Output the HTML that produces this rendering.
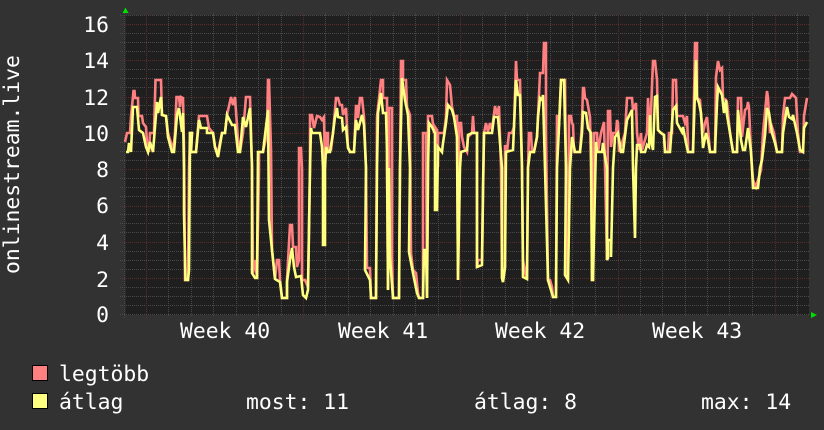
<!DOCTYPE html>
<html><head><meta charset="utf-8"><style>
html,body{margin:0;padding:0;background:#323232}
svg{display:block}
text{font-family:"DejaVu Sans Mono","Liberation Mono",monospace;font-size:21.4px;fill:#fff}
</style></head><body>
<svg width="824" height="430" viewBox="0 0 824 430" xmlns="http://www.w3.org/2000/svg">
<rect width="824" height="430" fill="#323232"/>
<rect x="124" y="15" width="685" height="300" fill="#1f1f1f"/>
<rect x="124" y="15" width="2" height="300" fill="#2a2a2a"/>
<g shape-rendering="crispEdges" stroke-width="1" fill="none">
<path stroke="#4a4a4a" stroke-dasharray="1 1" d="M120 15.5H809M120 33.5H809M120 42.5H809M120 51.5H809M120 69.5H809M120 78.5H809M120 87.5H809M120 105.5H809M120 114.5H809M120 123.5H809M120 142.5H809M120 151.5H809M120 160.5H809M120 178.5H809M120 187.5H809M120 196.5H809M120 214.5H809M120 223.5H809M120 232.5H809M120 251.5H809M120 260.5H809M120 269.5H809M120 287.5H809M120 296.5H809M120 305.5H809M120 314.5H809"/>
<path stroke="#4a4a4a" stroke-dasharray="1 1" d="M124.5 13V318M168.5 13V317M191.5 13V317M213.5 13V317M236.5 13V317M258.5 13V317M281.5 13V317M325.5 13V317M348.5 13V317M370.5 13V317M393.5 13V317M415.5 13V317M438.5 13V317M482.5 13V317M505.5 13V317M527.5 13V317M550.5 13V317M572.5 13V317M595.5 13V317M640.5 13V317M662.5 13V317M685.5 13V317M707.5 13V317M729.5 13V317M752.5 13V317M797.5 13V317"/>
<path stroke="#5a2c2c" stroke-dasharray="1 1" d="M120 24.5H811M120 60.5H811M120 97.5H811M120 133.5H811M120 169.5H811M120 206.5H811M120 242.5H811M120 278.5H811"/>
<path stroke="#5a2c2c" stroke-dasharray="1 1" d="M146.5 13V319M303.5 13V319M460.5 13V319M618.5 13V319M775.5 13V319"/>
</g>
<polyline fill="none" stroke="#ff8080" stroke-width="2.6" stroke-linejoin="miter" points="125,142 127,133 130,133 131,117 133.5,91 134.5,91 135,98 138,98 138.5,116 142,116 143,123 146,127 147,143 149,152 150,133 154,133 155.5,80 161,80 162,115 166,116 168,133 171,143 173,152 175,133 176.5,97 179,97 180,107 181,97 183,98 184,147 185,280 188,280 189,170 190,133 192,133 191,152 196,152 199,116 207,116 209,128 213,133 215,147 218,152 222,133 225,133 227,115 231,97 233,105 235,97 238,140 240,152 243,133 246,97 248,97 250,97 252,167 253,273 255,260 257,278 259,170 259,152 263,152 267,133 268,80 269,80 271,150 272,250 275,279 277,260 279,260 280,280 282,298 287,298 287,280 290,225 292,225 293,247 296,247 297,267 299,260 299,148 301,148 302,170 302,280 305,280 308,287 310,168 310,115 312,115 314,128 317,116 320,117 322,120 324,117 325,168 326,133 328,133 328,152 331,150 333,133 336,98 338,98 340,105 342,105 343,115 346,108 348,147 350,152 354,152 356,106 358,106 358,118 360,98 362,98 364,117 366,168 367,268 370,268 371,298 376,298 377,117 381,80 383,80 383,98 387,98 387,168 388,290 389,168 389,108 392,108 392,257 393,298 399,298 400,168 401,61 403,61 403,80 406,80 407,107 410,115 411,253 413,270 416,273 418,293 419,298 423,298 423,133 426,133 427,298 428,168 428,116 432,116 434,133 435,127 437,130 438,167 438,133 444,133 446,117 447,80 450,85 452,107 454,116 457,116 458,280 459,123 461,123 462,137 464,147 467,152 468,137 472,133 473,116 474,133 477,133 477,267 478,260 482,260 484,133 486,123 488,132 490,123 492,130 495,106 497,115 499,106 501,168 502,278 503,282 505,267 505,145 507,152 509,133 512,133 514,127 516,61 517,80 520,80 522,168 523,260 525,272 527,279 528,168 529,133 531,133 532,152 534,152 537,137 538,117 540,73 543,73 544,43 546,43 546,133 548,280 550,280 552,287 553,297 556,297 557,116 558,116 559,127 561,80 565,80 566,168 567,275 568,280 569,116 571,116 572,123 573,125 574,152 580,152 582,123 583,88 584,88 585,98 587,100 590,117 591,168 592,280 593,280 594,133 597,133 598,152 601,133 604,122 605,167 607,260 608,111 610,111 611,147 613,133 616,133 617,120 618,123 619,152 622,143 625,133 627,98 632,98 633,110 636,103 637,133 639,150 641,133 642,150 647,133 648,98 650,137 653,61 655,61 657,80 658,130 661,133 664,135 665,152 668,152 669,133 672,133 673,80 676,80 677,116 683,116 685,123 687,116 688,143 688,152 693,152 695,43 697,43 697,98 700,100 701,115 703,133 705,123 707,117 709,140 710,152 715,152 716,77 718,61 720,70 722,68 723,98 726,100 727,103 730,133 733,152 737,152 738,98 741,98 742,137 745,110 747,108 748,102 749,108 751,152 752,168 753,180 756,187 758,180 761,170 763,133 767,91 768,98 770,133 772,127 774,133 777,152 782,152 783,116 785,98 790,98 792,94 796,98 798,133 800,152 803,152 804,116 807,98"/>
<polyline fill="none" stroke="#ffff80" stroke-width="2.6" stroke-linejoin="miter" points="126,152 128,152 129,143 131,152 133,107 137,107 139,130 143,133 146,147 148,152 150,142 153,152 157,102 158,113 161,97 162,115 166,116 168,137 172,152 174,152 177,115 179,108 182,132 183,113 184,168 184,213 185.5,280 188,280 189,270 190,133 192,133 191,152 196,152 199,120 201,128 207,128 207,133 213,133 215,147 218,157 222,133 225,133 227,115 232,125 235,125 238,152 240,152 243,117 246,127 250,108 252,167 252,273 255,278 257,278 258,152 263,152 268,110 269,220 272,250 275,279 280,282 282,298 287,298 287,282 290,260 292,248 294,267 296,277 301,276 303,295 306,298 308,290 310,168 311,128 312,133 320,133 322,147 323,168 323,245 325,245 325,168 326,147 328,152 330,152 333,133 335,117 337,108 338,117 342,118 343,130 346,127 348,148 350,152 354,152 356,120 358,130 362,115 364,125 366,168 365,270 370,280 371,298 376,298 377,168 378,113 381,93 383,113 386,113 387,150 388,290 389,168 390,257 393,298 399,298 400,168 402,78 405,100 408,115 410,168 409,252 413,273 417,293 419,298 423,298 424,250 426,250 427,298 428,168 429,123 432,127 435,133 435,210 437,210 438,147 442,152 443,143 446,123 448,105 452,110 454,117 457,137 458,280 460,168 461,152 467,150 468,135 472,133 477,133 477,267 482,265 483,187 484,133 492,133 494,117 498,117 502,168 502,278 503,282 505,267 506,152 513,150 514,127 516,80 518,95 520,95 522,168 523,277 527,279 528,168 530,152 534,152 537,137 538,117 540,98 542,100 543,95 545,168 548,280 553,297 556,297 557,168 559,127 561,80 564,80 566,168 565,275 568,280 570,168 572,137 575,152 580,152 582,133 583,112 586,113 588,128 591,133 592,280 593,280 596,142 597,152 602,152 603,143 605,157 607,168 607,260 608,258 608,240 611,240 611,257 613,168 615,137 618,133 621,152 623,152 627,120 632,110 633,168 635,238 636,168 637,145 640,145 641,152 645,152 647,145 649,147 650,115 651,140 653,150 655,97 657,96 658,130 661,133 664,135 665,152 670,152 673,110 676,106 677,123 682,132 683,127 686,143 688,152 693,152 696,60 697,98 699,103 701,113 703,148 706,133 708,140 710,152 715,152 717,103 718,87 722,95 724,113 726,100 727,115 730,133 733,152 737,152 738,110 741,140 743,150 745,150 748,128 751,152 752,168 753,188 758,188 760,168 762,160 765,135 767,108 769,113 772,133 775,143 777,152 782,152 783,133 787,107 789,117 792,119 793,115 797,133 800,150 803,152 804,128 807,122"/>
<polygon points="122.5,13 128.5,13 125.5,7.5" fill="#00e000"/>
<polygon points="811,312 811,318 817,315" fill="#00e000"/>
<g text-anchor="end">
<text x="109" y="32">16</text>
<text x="109" y="68">14</text>
<text x="109" y="105">12</text>
<text x="109" y="141">10</text>
<text x="109" y="177">8</text>
<text x="109" y="213">6</text>
<text x="109" y="250">4</text>
<text x="109" y="287">2</text>
<text x="109" y="322">0</text>
</g>
<text x="180" y="338">Week 40</text>
<text x="338" y="338">Week 41</text>
<text x="495" y="338">Week 42</text>
<text x="652" y="338">Week 43</text>
<text transform="translate(19 274) rotate(-90)" x="0" y="0">onlinestream.live</text>
<rect x="32.5" y="365.5" width="15" height="15" fill="#ff8080" stroke="#000"/>
<rect x="32.5" y="393.5" width="15" height="15" fill="#ffff80" stroke="#000"/>
<text x="59" y="381">legtöbb</text>
<text x="59" y="409">átlag</text>
<text x="246" y="409">most: 11</text>
<text x="474" y="409">átlag: 8</text>
<text x="701" y="409">max: 14</text>
</svg>
</body></html>
